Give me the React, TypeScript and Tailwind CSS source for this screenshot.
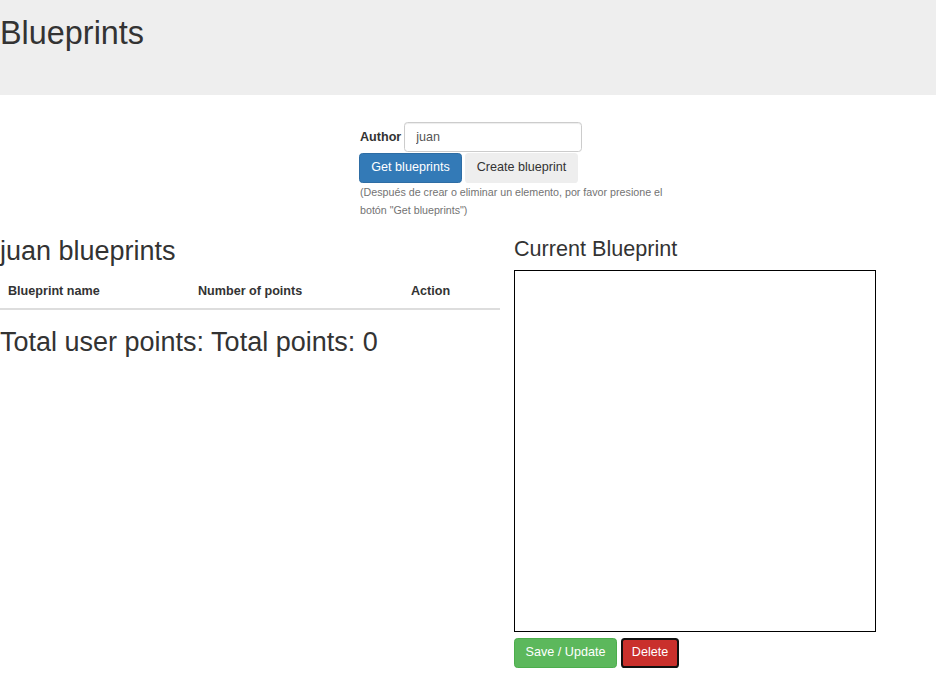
import React from "react";

export default function App() {
  return (
    <div className="min-h-[692px] bg-white text-[#333] font-['Liberation_Sans',Arial,sans-serif] text-[12.6px] leading-[18px]">
      <header className="h-[95px] bg-[#eeeeee] pt-[16px]">
        <h1 className="text-[32.4px] leading-[35px] font-normal">Blueprints</h1>
      </header>

      <section className="ml-[359px] w-[320px] pt-[27px]">
        <div className="flex items-center h-[30px]">
          <label className="font-bold ml-[1px] mr-[3px]">Author</label>
          <input
            readOnly
            value="juan"
            className="w-[178px] h-[30px] border border-[#ccc] rounded-[3.6px] px-[11px] text-[#555] text-[12.6px] shadow-[inset_0_1px_1px_rgba(0,0,0,0.075)] outline-none"
          />
        </div>
        <div className="flex gap-[3px] mt-[1px]">
          <button className="w-[103px] h-[30px] rounded-[3.6px] bg-[#337ab7] border border-[#2e6da4] text-white text-[12.6px] leading-[18px] pb-[2px]">
            Get blueprints
          </button>
          <button className="w-[113px] h-[30px] rounded-[3.6px] bg-[#eeeeee] text-[#333] text-[12.6px] leading-[18px] pb-[2px]">
            Create blueprint
          </button>
        </div>
        <p className="text-[10.7px] leading-[18px] text-[#737373] ml-[1px]">
          (Después de crear o eliminar un elemento, por favor presione el
          <br />
          botón "Get blueprints")
        </p>
      </section>

      <div className="flex mt-[17px]">
        <div className="w-[500px]">
          <h2 className="text-[27px] leading-[30px] font-normal">juan blueprints</h2>
          <table className="w-[500px] mt-[9px] border-collapse">
            <thead>
              <tr className="border-b-2 border-[#dddddd]">
                <th className="w-[190px] text-left font-bold px-[8px] py-[7px] leading-[19px]">Blueprint name</th>
                <th className="w-[213px] text-left font-bold px-[8px] py-[7px] leading-[19px]">Number of points</th>
                <th className="text-left font-bold px-[8px] py-[7px] leading-[19px]">Action</th>
              </tr>
            </thead>
            <tbody></tbody>
          </table>
          <h2 className="text-[27px] leading-[30px] font-normal mt-[17px]">Total user points: Total points: 0</h2>
        </div>
        <div className="ml-[14px]">
          <h3 className="text-[21.6px] leading-[24px] font-normal mt-[1px]">Current Blueprint</h3>
          <div className="mt-[9px] w-[362px] h-[362px] border border-black bg-white"></div>
          <div className="flex items-start gap-[4px] mt-[6px]">
            <button className="w-[103px] h-[30px] rounded-[3.6px] bg-[#5cb85c] border border-[#4cae4c] text-white text-[12.6px] leading-[18px] pb-[3px]">
              Save / Update
            </button>
            <button className="w-[58px] h-[30px] rounded-[3.6px] bg-[#c9302c] border-2 border-[#111] text-white text-[12.6px] leading-[18px] pb-[3px]">
              Delete
            </button>
          </div>
        </div>
      </div>
    </div>
  );
}
